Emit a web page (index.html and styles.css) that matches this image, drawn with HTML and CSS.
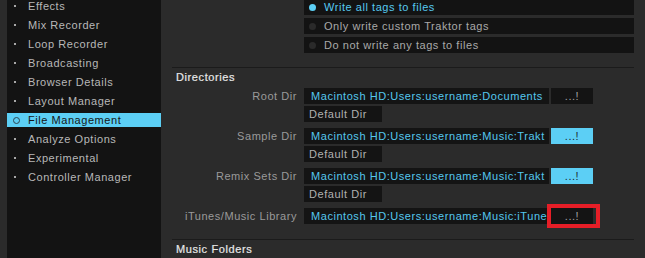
FILE: index.html
```html
<!DOCTYPE html>
<html>
<head>
<meta charset="utf-8">
<link rel="stylesheet" href="styles.css">
</head>
<body>
<div class="app">
  <div class="edge"></div>
  <nav class="sidebar">
    <ul class="nav">
      <li class="nav-item"><span class="bullet"></span>Effects</li>
      <li class="nav-item"><span class="bullet"></span>Mix Recorder</li>
      <li class="nav-item"><span class="bullet"></span>Loop Recorder</li>
      <li class="nav-item"><span class="bullet"></span>Broadcasting</li>
      <li class="nav-item"><span class="bullet"></span>Browser Details</li>
      <li class="nav-item"><span class="bullet"></span>Layout Manager</li>
      <li class="nav-item selected"><span class="bullet"></span>File Management</li>
      <li class="nav-item"><span class="bullet"></span>Analyze Options</li>
      <li class="nav-item"><span class="bullet"></span>Experimental</li>
      <li class="nav-item"><span class="bullet"></span>Controller Manager</li>
    </ul>
  </nav>
  <main class="main">
    <div class="options">
      <div class="opt active"><span class="radio"></span>Write all tags to files</div>
      <div class="opt"><span class="radio"></span>Only write custom Traktor tags</div>
      <div class="opt"><span class="radio"></span>Do not write any tags to files</div>
    </div>

    <h2 class="section-title">Directories</h2>
    <div class="dirs">
      <div class="dir">
        <div class="label">Root Dir</div>
        <div class="controls">
          <div class="pathrow">
            <div class="path">Macintosh HD:Users:username:Documents</div>
            <div class="browse">...!</div>
          </div>
          <div class="default">Default Dir</div>
        </div>
      </div>
      <div class="dir">
        <div class="label">Sample Dir</div>
        <div class="controls">
          <div class="pathrow">
            <div class="path">Macintosh HD:Users:username:Music:Trakt</div>
            <div class="browse lit">...!</div>
          </div>
          <div class="default">Default Dir</div>
        </div>
      </div>
      <div class="dir">
        <div class="label">Remix Sets Dir</div>
        <div class="controls">
          <div class="pathrow">
            <div class="path">Macintosh HD:Users:username:Music:Trakt</div>
            <div class="browse lit">...!</div>
          </div>
          <div class="default">Default Dir</div>
        </div>
      </div>
      <div class="dir">
        <div class="label">iTunes/Music Library</div>
        <div class="controls">
          <div class="pathrow">
            <div class="path">Macintosh HD:Users:username:Music:iTune</div>
            <div class="browse marked">...!<span class="highlight-box"></span></div>
          </div>
        </div>
      </div>
    </div>

    <h2 class="section-title last">Music Folders</h2>
  </main>
</div>
</body>
</html>
```

FILE: styles.css
```css
* { box-sizing: border-box; }

html, body {
  margin: 0;
  padding: 0;
  height: 100%;
  overflow: hidden;
  background: #2b2b2b;
}

body {
  font-family: "Liberation Sans", Arial, Helvetica, sans-serif;
  font-size: 11px;
  letter-spacing: 0.55px;
  color: #b0b0b0;
}

.app {
  display: flex;
  height: 258px;
}

.edge {
  width: 7px;
  flex: none;
  background: #2b2b2b;
}

.sidebar {
  width: 154px;
  flex: none;
  background: #131313;
}

.nav {
  list-style: none;
  margin: -1px 0 0 0;
  padding: 0;
  display: flex;
  flex-direction: column;
  gap: 5px;
}

.nav-item {
  height: 14px;
  display: flex;
  align-items: center;
  color: #b8b8b8;
  white-space: nowrap;
}

.bullet {
  width: 21px;
  flex: none;
  display: flex;
  align-items: center;
  padding-left: 7px;
}

.bullet::before {
  content: "";
  width: 2px;
  height: 2px;
  background: #a8a8a8;
}

.nav-item.selected {
  background: #5ccff5;
  color: #161616;
}

.nav-item.selected .bullet { padding-left: 6px; }

.nav-item.selected .bullet::before {
  width: 5px;
  height: 5px;
  border-radius: 50%;
  background: transparent;
  border: 1.5px solid #2e4550;
}

.main {
  flex: 1;
  padding: 0 11px;
  min-width: 0;
}

.options {
  margin: -1px 0 0 132px;
  display: flex;
  flex-direction: column;
  gap: 3px;
}

.opt {
  height: 16px;
  background: #131313;
  display: flex;
  align-items: center;
  padding-left: 5px;
  gap: 8px;
  color: #a9a9a9;
  white-space: nowrap;
}

.opt .radio {
  width: 7px;
  height: 7px;
  border-radius: 50%;
  background: #2a2a2a;
  flex: none;
}

.opt.active { color: #56c9f0; }
.opt.active .radio { background: #5ccff5; }

.section-title {
  margin: 14px 0 0 0;
  border-top: 1px solid #1b1b1b;
  padding: 1px 0 0 4px;
  height: 17px;
  line-height: 16px;
  font-size: 11px;
  font-weight: normal;
  color: #e8e8e8;
  letter-spacing: 0.6px;
  -webkit-text-stroke: 0.2px #e8e8e8;
}

.section-title.last { margin-top: 15px; }

.dirs {
  margin-top: 4px;
  display: flex;
  flex-direction: column;
  gap: 6px;
}

.dir {
  display: grid;
  grid-template-columns: 125px 1fr;
  column-gap: 7px;
}

.label {
  text-align: right;
  line-height: 16px;
  color: #9a9a9a;
  white-space: nowrap;
}

.controls {
  display: flex;
  flex-direction: column;
  gap: 2px;
}

.pathrow {
  display: flex;
  gap: 2px;
}

.path {
  width: 245px;
  height: 16px;
  line-height: 16px;
  background: #141414;
  color: #54c7ee;
  padding-left: 7px;
  white-space: nowrap;
  overflow: hidden;
}

.browse {
  position: relative;
  width: 42px;
  height: 16px;
  line-height: 16px;
  background: #141414;
  color: #a3a3a3;
  text-align: center;
}

.browse.lit {
  background: #5ccff5;
  color: #1c2a30;
}

.highlight-box {
  position: absolute;
  left: -4px;
  right: -7px;
  top: -4px;
  bottom: -4px;
  border: 4px solid #e61e27;
}

.default {
  width: 78px;
  height: 16px;
  line-height: 16px;
  background: #141414;
  color: #b0b0b0;
  padding-left: 5px;
  white-space: nowrap;
}
```
